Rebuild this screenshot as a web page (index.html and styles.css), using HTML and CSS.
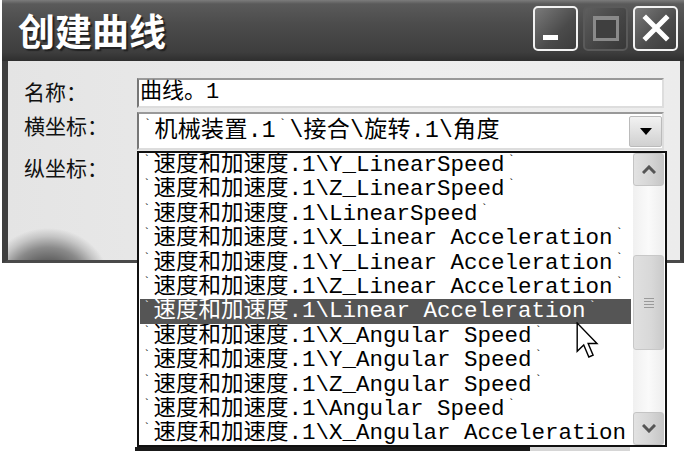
FILE: index.html
```html
<!DOCTYPE html>
<html lang="zh-CN">

<head>
    <meta charset="UTF-8">
    <title>创建曲线</title>
    <link rel="stylesheet" href="styles.css">
</head>

<body>
    <div class="screen">
        <div class="dialog">
            <div class="titlebar">
                <span class="title">创建曲线</span>
                <div class="controls">
                    <span class="ctl ctl-min"><i></i></span>
                    <span class="ctl ctl-max"><i></i></span>
                    <span class="ctl ctl-close">
                        <svg width="30" height="30" viewBox="0 0 30 30">
                            <path d="M5 5 L25 25 M25 5 L5 25" stroke="#fff" stroke-width="5" stroke-linecap="square" />
                        </svg>
                    </span>
                </div>
            </div>

            <div class="form">
                <label class="label">名称：</label>
                <div class="field">曲线。1</div>

                <label class="label">横坐标：</label>
                <div class="field combo">
                    <span class="combo-text"><span class="tick">`</span>机械装置.1<span class="tick">`</span>\接合\旋转.1\角度</span>
                    <span class="drop-btn">
                        <svg width="12" height="8" viewBox="0 0 12 8"><path d="M0 0 H12 L6 7 Z" fill="#000" /></svg>
                    </span>
                </div>

                <label class="label">纵坐标：</label>
                <div></div>
            </div>
        </div>

        <div class="bottom-strip"><span class="strip-dark"></span><span class="strip-light"></span></div>

        <!-- open list of the 纵坐标 combo, drawn over the dialog -->
        <div class="dropdown">
            <ul class="options">
                <li><span class="tick">`</span>速度和加速度.1\Y_LinearSpeed<span class="tick">`</span></li>
                <li><span class="tick">`</span>速度和加速度.1\Z_LinearSpeed<span class="tick">`</span></li>
                <li><span class="tick">`</span>速度和加速度.1\LinearSpeed<span class="tick">`</span></li>
                <li><span class="tick">`</span>速度和加速度.1\X_Linear Acceleration<span class="tick">`</span></li>
                <li><span class="tick">`</span>速度和加速度.1\Y_Linear Acceleration<span class="tick">`</span></li>
                <li><span class="tick">`</span>速度和加速度.1\Z_Linear Acceleration<span class="tick">`</span></li>
                <li class="selected"><span class="tick">`</span>速度和加速度.1\Linear Acceleration<span class="tick">`</span></li>
                <li><span class="tick">`</span>速度和加速度.1\X_Angular Speed<span class="tick">`</span></li>
                <li><span class="tick">`</span>速度和加速度.1\Y_Angular Speed<span class="tick">`</span></li>
                <li><span class="tick">`</span>速度和加速度.1\Z_Angular Speed<span class="tick">`</span></li>
                <li><span class="tick">`</span>速度和加速度.1\Angular Speed<span class="tick">`</span></li>
                <li><span class="tick">`</span>速度和加速度.1\X_Angular Acceleration</li>
            </ul>
            <div class="scrollbar">
                <span class="sb-btn">
                    <svg width="14" height="9" viewBox="0 0 14 9"><path d="M1 8 L7 2 L13 8" fill="none" stroke="#555" stroke-width="3" /></svg>
                </span>
                <span class="sb-gap"></span>
                <span class="sb-thumb"><i></i><i></i><i></i><i></i></span>
                <span class="sb-fill"></span>
                <span class="sb-btn">
                    <svg width="14" height="9" viewBox="0 0 14 9"><path d="M1 1 L7 7 L13 1" fill="none" stroke="#555" stroke-width="3" /></svg>
                </span>
            </div>
        </div>

        <svg class="cursor" width="25" height="38" viewBox="0 0 14 21.5">
            <path d="M0.6 0.6 V16.6 L4.3 13 L7.2 19.8 L9.6 18.8 L6.8 12.2 H11.8 Z" fill="#fff" stroke="#000" stroke-width="0.8" stroke-linejoin="miter" />
        </svg>
    </div>
</body>

</html>
```

FILE: styles.css
```css
body {
    margin: 0;
    background-color: #fff;
    font-family: "Liberation Mono", "Noto Sans CJK SC", monospace;
}

.screen {
    position: relative;
    width: 685px;
    height: 451px;
    overflow: hidden;
    display: flex;
    flex-direction: column;
}

.dialog {
    margin-left: 2px;
    width: 682px;
    height: 263px;
    box-sizing: border-box;
    border-left: 6px solid #3e3e3e;
    border-right: 4px solid #3e3e3e;
    border-bottom: 3px solid #4a4a4a;
    display: flex;
    flex-direction: column;
    background-color: #e9e9e9;
    /* faded globe in the lower left corner */
    background-image:
        radial-gradient(ellipse 62px 56px at 40px 284px, #3a3a3a 0%, #555 35%, #8a8a8a 65%, #c4c4c4 85%, rgba(233, 233, 233, 0) 100%),
        linear-gradient(90deg, #e4e4e4, #eeeeee 60%, #ececec);
}

.titlebar {
    height: 61px;
    margin-left: -6px;
    margin-right: -4px;
    padding-left: 16px;
    padding-right: 6px;
    display: flex;
    align-items: center;
    justify-content: space-between;
    background: linear-gradient(#7c7c7c 0, #5a5a5a 4px, #4b4b4b 25px, #3e3e3e 52px, #2e2e2e 61px);
}

.title {
    font-family: "Noto Sans CJK SC", sans-serif;
    font-size: 37px;
    font-weight: bold;
    color: #fff;
    text-shadow: 2px 2px 1px #222;
    margin-top: -2px;
}

.controls {
    display: flex;
    gap: 5px;
    margin-top: -5px;
}

.ctl {
    width: 45px;
    height: 45px;
    box-sizing: border-box;
    border: 2px solid #f2f2f2;
    border-radius: 5px;
    background: linear-gradient(135deg, #7a7a7a, #4a4a4a 60%, #3c3c3c);
    display: flex;
    align-items: center;
    justify-content: center;
}

.ctl-min {
    align-items: flex-end;
    justify-content: flex-start;
    padding: 0 0 9px 8px;
}

.ctl-min i {
    display: block;
    width: 15px;
    height: 5px;
    background-color: #fff;
}

.ctl-max {
    border-color: #5a5a5a;
    background: linear-gradient(135deg, #5e5e5e, #444 60%, #383838);
}

.ctl-max i {
    display: block;
    width: 20px;
    height: 18px;
    border: 3px solid #8a8a8a;
    border-top-width: 4px;
    background-color: #3f3f3f;
}

.form {
    display: grid;
    grid-template-columns: 113px 527px;
    grid-template-rows: 30px 38px 30px;
    row-gap: 4px;
    padding: 17px 16px 0 16px;
}

.label {
    font-family: "Noto Sans CJK SC", sans-serif;
    font-size: 21px;
    line-height: 26px;
    color: #111;
}

.field {
    box-sizing: border-box;
    border: 2px solid #999;
    border-left-color: #777;
    border-bottom-color: #ddd;
    border-right-color: #ddd;
    background-color: #fff;
    font-size: 22px;
    line-height: 26px;
    padding-left: 1px;
    color: #000;
}

.combo {
    display: flex;
    justify-content: space-between;
    padding-left: 2px;
}

.combo-text {
    padding-top: 4px;
    font-size: 23px;
    letter-spacing: 0.3px;
}

.tick {
    display: inline-block;
    width: 13.5px;
    font-size: 11px;
    line-height: 12px;
    vertical-align: top;
    text-align: center;
}

.drop-btn {
    width: 33px;
    height: 31px;
    margin: 2px 0 0 0;
    box-sizing: border-box;
    border: 1px solid #bbb;
    border-radius: 2px;
    background: linear-gradient(#f2f2f2, #d0d0d0);
    display: flex;
    align-items: center;
    justify-content: center;
}

.bottom-strip {
    margin-top: auto;
    height: 4px;
    display: flex;
}

.strip-dark {
    margin-left: 135px;
    width: 395px;
    background-color: #1a1a1a;
}

.strip-light {
    width: 100px;
    background-color: #d6d6d6;
}

.dropdown {
    position: absolute;
    left: 137px;
    top: 151px;
    width: 530px;
    height: 296px;
    box-sizing: border-box;
    border: 2px solid #111;
    background-color: #fff;
    display: flex;
}

.options {
    flex: 1;
    list-style: none;
    margin: 0;
    padding: 0 2px 0 1px;
    overflow: hidden;
}

.options li {
    height: 24.4px;
    font-size: 22.5px;
    line-height: 24.4px;
    white-space: nowrap;
    overflow: hidden;
    color: #000;
}

.options li .tick {
    line-height: 14px;
}

.options li.selected {
    background-color: #555;
    color: #fff;
}

.scrollbar {
    width: 31px;
    margin-right: 1px;
    display: flex;
    flex-direction: column;
    background: linear-gradient(90deg, #f0f0f0, #fafafa 50%, #eeeeee);
}

.sb-btn {
    height: 33px;
    box-sizing: border-box;
    border: 1px solid #c4c4c4;
    border-radius: 3px;
    background: linear-gradient(90deg, #e2e2e2, #d4d4d4 60%, #c6c6c6);
    display: flex;
    align-items: center;
    justify-content: center;
}

.sb-gap {
    height: 69px;
}

.sb-thumb {
    height: 95px;
    box-sizing: border-box;
    border: 1px solid #c8c8c8;
    border-radius: 3px;
    background: linear-gradient(90deg, #e0e0e0, #d8d8d8 60%, #cbcbcb);
    display: flex;
    flex-direction: column;
    align-items: center;
    justify-content: center;
    gap: 2px;
}

.sb-thumb i {
    display: block;
    width: 10px;
    height: 1px;
    background-color: #9a9a9a;
}

.sb-fill {
    flex: 1;
}

.cursor {
    position: absolute;
    left: 576px;
    top: 322px;
}
```
